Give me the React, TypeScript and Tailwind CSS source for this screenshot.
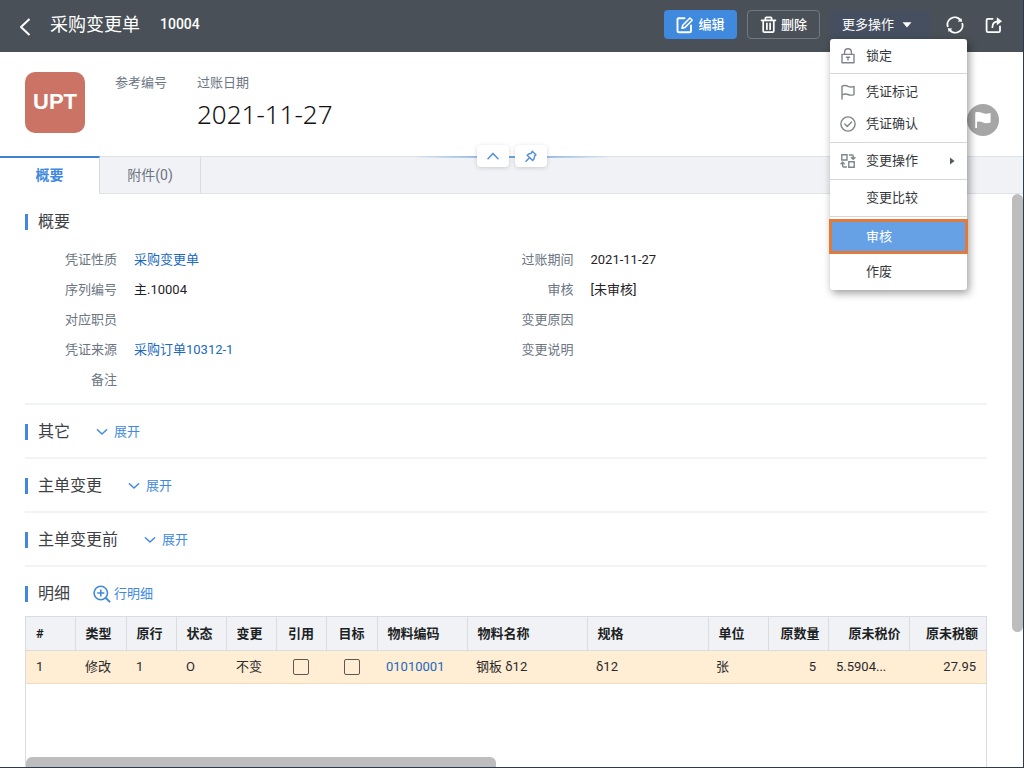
import React from "react";

const stroke = {
  fill: "none",
  stroke: "currentColor",
  strokeLinecap: "round" as const,
  strokeLinejoin: "round" as const,
};

function BackIcon() {
  return (
    <svg width="12" height="18" viewBox="0 0 12 18" {...stroke} strokeWidth="2" strokeLinecap="butt">
      <path d="M10.5 1 L2 9 L10.5 17" />
    </svg>
  );
}
function EditIcon() {
  return (
    <svg width="18" height="18" viewBox="0 0 18 18" {...stroke} strokeWidth="1.9">
      <path d="M8.5 2.2H2.8Q1.5 2.2 1.5 3.5V15Q1.5 16.3 2.8 16.3H13.7Q15 16.3 15 15V9.4" />
      <path d="M6 12.2 L6.8 9.2 L13.9 2 L16.2 4.3 L9 11.4Z" strokeWidth="1.6" />
    </svg>
  );
}
function TrashIcon() {
  return (
    <svg width="17" height="18" viewBox="0 0 17 18" {...stroke} strokeWidth="1.7">
      <path d="M1.5 4.3H15.5M5.4 4V2.2Q5.4 1.4 6.2 1.4H10.8Q11.6 1.4 11.6 2.2V4M3.2 4.5V15Q3.2 16.2 4.4 16.2H12.6Q13.8 16.2 13.8 15V4.5M6.9 7.4V13.2M10.1 7.4V13.2" />
    </svg>
  );
}
function RefreshIcon() {
  return (
    <svg width="18" height="18" viewBox="0 0 18 18" {...stroke} strokeWidth="1.9" strokeLinecap="butt">
      <path d="M1.9 11 A7.2 7.2 0 0 1 14.4 4.2M16.1 7 A7.2 7.2 0 0 1 3.6 13.8" />
      <path d="M16.2 5.7 L11.6 5.4 L15.3 2Z M1.8 12.3 L6.4 12.6 L2.7 16Z" fill="currentColor" stroke="none" />
    </svg>
  );
}
function ShareIcon() {
  return (
    <svg width="18" height="18" viewBox="0 0 18 18" {...stroke} strokeWidth="1.8">
      <path d="M7.6 2.8H3Q1.6 2.8 1.6 4.2V14.8Q1.6 16.2 3 16.2H13.6Q15 16.2 15 14.8V10.5" />
      <path d="M7.4 11.2C7.4 7.6 9.3 5.6 13.2 5.4" />
      <path d="M11.8 1.3 L17 5.3 L11.8 9.2Z" fill="currentColor" stroke="none" />
    </svg>
  );
}
function LockIcon() {
  return (
    <svg width="16" height="16" viewBox="0 0 16 16" {...stroke} strokeWidth="1.4">
      <path d="M2 6.4H14V14.8H2ZM4.6 6.2V4.2A3.4 3.4 0 0 1 11.4 4.2V6.2M6.4 9.2H9.6M8 9.4V12" />
    </svg>
  );
}
function FlagIcon() {
  return (
    <svg width="16" height="16" viewBox="0 0 16 16" {...stroke} strokeWidth="1.4">
      <path d="M2 15V2.2C4.4 1.2 6.2 1.4 8 2.3C9.8 3.2 11.6 3.2 14 2.4V10.6C11.6 11.4 9.8 11.4 8 10.5C6.2 9.8 4.4 9.9 2 10.8" />
    </svg>
  );
}
function CheckIcon() {
  return (
    <svg width="16" height="16" viewBox="0 0 16 16" {...stroke} strokeWidth="1.4">
      <circle cx="8" cy="8" r="7.1" />
      <path d="M4.8 8 L7.2 10.4 L11.6 6" />
    </svg>
  );
}
function SwapIcon() {
  return (
    <svg width="16" height="16" viewBox="0 0 16 16" {...stroke} strokeWidth="1.4" strokeLinejoin="miter">
      <path d="M1.8 1.8H7V7H1.8ZM8.8 8.8H14.2V14.2H8.8ZM9.4 2H12.2Q13.2 2 13.2 3V5.6M11.4 4.4L13.2 6.2L15 4.4M2.6 9.4V12.8Q2.6 14 3.8 14H6.4M1 10.8L2.6 9.2L4.2 10.8" />
    </svg>
  );
}
function Chevron({ up = false }: { up?: boolean }) {
  return (
    <svg width="12" height="8" viewBox="0 0 12 8" {...stroke} strokeWidth="1.5">
      <path d={up ? "M1 6.8 L6 1.4 L11 6.8" : "M1.4 1.8 L6 6 L10.6 1.8"} />
    </svg>
  );
}
function PinIcon() {
  return (
    <svg width="12" height="12" viewBox="0 0 12 12" {...stroke} strokeWidth="1.5">
      <path d="M7.2 1.2 L10.9 4.8 L9.6 5.8 L9 8.9 L7.6 10.4 L2.2 5.2 L3.7 4 L6.3 3.2ZM4.5 7.8 L1 11.2" />
    </svg>
  );
}
function ZoomIcon() {
  return (
    <svg width="18" height="18" viewBox="0 0 18 18" {...stroke} strokeWidth="1.6">
      <circle cx="7.8" cy="8" r="6.7" />
      <path d="M7.8 5V11M4.8 8H10.8" />
      <path d="M12.8 13 L16.5 16.6" strokeWidth="2" />
    </svg>
  );
}

function MenuItem({ icon, label, arrow = false }: { icon?: React.ReactNode; label: string; arrow?: boolean }) {
  return (
    <button type="button" role="menuitem" className="flex h-8 w-full items-center gap-2.5 pl-2.5 pr-3 text-left">
      <span className="flex w-4 shrink-0 text-[#7f858b]">{icon}</span>
      <span className="flex-1">{label}</span>
      {arrow && (
        <svg width="5" height="8" viewBox="0 0 5 8">
          <path d="M0 0.5 L4.6 4 L0 7.5Z" fill="#555b63" />
        </svg>
      )}
    </button>
  );
}

function MoreMenu() {
  return (
    <div
      role="menu"
      className="absolute left-0 top-full z-20 w-[137px] rounded-[3px] bg-white text-[13px] font-normal text-[#33373c] shadow-[2px_3px_8px_rgba(0,0,0,0.4)]"
    >
      <div className="border-b border-[#d5d7da] py-px">
        <MenuItem icon={<LockIcon />} label="锁定" />
      </div>
      <div className="border-b border-[#d5d7da] py-0.5">
        <MenuItem icon={<FlagIcon />} label="凭证标记" />
        <MenuItem icon={<CheckIcon />} label="凭证确认" />
      </div>
      <div className="border-b border-[#d5d7da] py-0.5">
        <MenuItem icon={<SwapIcon />} label="变更操作" arrow />
      </div>
      <div className="border-b border-[#d5d7da] py-0.5">
        <MenuItem label="变更比较" />
      </div>
      <div className="-mx-px mt-0.5 border-[3px] border-[#e17b3b] bg-[#66a1e6] text-white">
        <button type="button" role="menuitem" className="flex h-[29px] w-full items-center pl-[34px] text-left">
          审核
        </button>
      </div>
      <div className="py-0.5">
        <MenuItem label="作废" />
      </div>
    </div>
  );
}

function Header() {
  return (
    <header className="flex h-[52px] shrink-0 items-center bg-[#495057] pb-[3px] pl-[19px] pr-5 text-white">
      <button type="button" aria-label="返回" className="pt-1">
        <BackIcon />
      </button>
      <h1 className="ml-[19px] text-[18px] leading-6">采购变更单</h1>
      <span className="ml-5 text-[14px] font-medium">10004</span>
      <div className="ml-auto flex h-[29px] items-center gap-2.5 text-[13px] font-medium">
        <button type="button" className="flex h-full w-[73px] items-center justify-center gap-1 rounded bg-[#3f89de]">
          <EditIcon />
          编辑
        </button>
        <button
          type="button"
          className="flex h-full w-[73px] items-center justify-center gap-1 rounded border border-[#727980]"
        >
          <TrashIcon />
          删除
        </button>
        <div className="relative h-full">
          <button
            type="button"
            aria-haspopup="menu"
            aria-expanded="true"
            className="flex h-full w-[100px] items-center gap-2 rounded bg-[#454f60] pl-3 font-normal"
          >
            更多操作
            <svg width="10" height="6" viewBox="0 0 10 6">
              <path d="M0.5 0.3H9.5L5 5.5Z" fill="currentColor" />
            </svg>
          </button>
          <MoreMenu />
        </div>
        <button type="button" aria-label="刷新" className="ml-1.5">
          <RefreshIcon />
        </button>
        <button type="button" aria-label="分享" className="ml-[11px]">
          <ShareIcon />
        </button>
      </div>
    </header>
  );
}

function Summary() {
  return (
    <section className="relative flex h-[104px] shrink-0 bg-white pl-[25px] pr-6 pt-5">
      <div className="flex h-[61px] w-[60px] items-center justify-center rounded-[10px] bg-[#cb7466] pb-0.5 font-['Liberation_Sans',sans-serif] text-[22px] font-bold text-white">
        UPT
      </div>
      <div className="ml-[30px] text-[13px] leading-[22px] text-[#6c7683]">参考编号</div>
      <div className="ml-[30px]">
        <div className="text-[13px] leading-[22px] text-[#6c7683]">过账日期</div>
        <div className="font-['Noto_Sans',sans-serif] text-[26px] font-light leading-10 text-[#111]">2021-11-27</div>
      </div>
      <button
        type="button"
        aria-label="标记"
        className="ml-auto mt-8 flex h-8 w-8 items-center justify-center rounded-full bg-[#a6a6a6] text-white"
      >
        <svg width="18" height="18" viewBox="0 0 18 18" fill="currentColor">
          <path d="M1.2 1.4C3.8 0.6 5.8 0.8 8 1.8C10.8 3 13 3 16.6 1.9V11.5C13 12.6 11 12.3 8.4 11.2C6.4 10.4 4.6 10.4 3 10.9V17H1.2Z" />
        </svg>
      </button>
      <div className="absolute -bottom-[11px] left-1/2 z-10 flex h-[22px] w-[200px] -translate-x-1/2 items-center justify-center gap-1.5">
        <span className="absolute inset-x-0 top-[11px] h-0.5 bg-gradient-to-r from-transparent via-[#6fa6e4] to-transparent" />
        <button
          type="button"
          aria-label="收起"
          className="relative flex h-[22px] w-8 items-center justify-center rounded-sm bg-white text-[#5590da] shadow-[0_1px_4px_rgba(0,0,0,0.16)]"
        >
          <Chevron up />
        </button>
        <button
          type="button"
          aria-label="固定"
          className="relative flex h-[22px] w-8 items-center justify-center rounded-sm bg-white text-[#5590da] shadow-[0_1px_4px_rgba(0,0,0,0.16)]"
        >
          <PinIcon />
        </button>
      </div>
    </section>
  );
}

function Tabs() {
  return (
    <div role="tablist" className="flex h-[38px] shrink-0 border-y border-[#dfe2e7] bg-[#f1f2f6] text-[14px]">
      <button
        type="button"
        role="tab"
        aria-selected="true"
        className="-my-px w-[100px] border-r border-t-2 border-r-[#d9dce2] border-t-[#3f83d4] bg-white pb-0.5 font-bold text-[#4189de]"
      >
        概要
      </button>
      <button type="button" role="tab" aria-selected="false" className="w-[101px] border-r border-[#d9dce2] text-[#6c7580]">
        附件(0)
      </button>
    </div>
  );
}

function SectionTitle({ children }: { children: React.ReactNode }) {
  return (
    <h2 className="flex items-center gap-2.5 text-[16px] leading-6 text-[#3d4146]">
      <span className="h-4 w-[3px] bg-[#4189d8]" />
      {children}
    </h2>
  );
}

type FieldData = { label: string; value?: string; link?: boolean };

const leftFields: FieldData[] = [
  { label: "凭证性质", value: "采购变更单", link: true },
  { label: "序列编号", value: "主.10004" },
  { label: "对应职员" },
  { label: "凭证来源", value: "采购订单10312-1", link: true },
  { label: "备注" },
];
const rightFields: FieldData[] = [
  { label: "过账期间", value: "2021-11-27" },
  { label: "审核", value: "[未审核]" },
  { label: "变更原因" },
  { label: "变更说明" },
];

function FieldList({ fields }: { fields: FieldData[] }) {
  return (
    <dl>
      {fields.map((f) => (
        <div key={f.label} className="flex h-[30px] items-center">
          <dt className="w-[92px] text-right text-[#6c7683]">{f.label}</dt>
          <dd className="ml-[17px] text-[#1f2226]">
            {f.link ? (
              <a href="#" className="text-[#2069bd]">
                {f.value}
              </a>
            ) : (
              f.value
            )}
          </dd>
        </div>
      ))}
    </dl>
  );
}

function Collapsed({ title }: { title: string }) {
  return (
    <section className="flex h-[54px] items-center border-b-2 border-[#f2f3f5] pt-px">
      <SectionTitle>{title}</SectionTitle>
      <button type="button" aria-expanded="false" className="ml-[26px] flex items-center gap-1.5 text-[#4189de]">
        <Chevron />
        展开
      </button>
    </section>
  );
}

const columns: { name: string; width: string; align?: "center" | "right" }[] = [
  { name: "#", width: "w-[49px]" },
  { name: "类型", width: "w-[51px]" },
  { name: "原行", width: "w-[50px]" },
  { name: "状态", width: "w-[50px]" },
  { name: "变更", width: "w-[50px]" },
  { name: "引用", width: "w-[50px]", align: "center" },
  { name: "目标", width: "w-[51px]", align: "center" },
  { name: "物料编码", width: "w-[90px]" },
  { name: "物料名称", width: "w-[120px]" },
  { name: "规格", width: "w-[121px]" },
  { name: "单位", width: "w-[60px]" },
  { name: "原数量", width: "w-[60px]", align: "right" },
  { name: "原未税价", width: "w-[81px]", align: "right" },
  { name: "原未税额", width: "w-auto", align: "right" },
];

function Details() {
  return (
    <section className="flex min-h-0 flex-1 flex-col">
      <div className="flex h-[49px] shrink-0 items-center pt-[5px]">
        <SectionTitle>明细</SectionTitle>
        <button type="button" className="ml-[23px] flex items-center gap-[3px] text-[#4189de]">
          <ZoomIcon />
          行明细
        </button>
      </div>
      <div className="flex min-h-0 flex-1 flex-col border-x border-t border-[#d9dce1]">
        <table className="w-full table-fixed border-collapse">
          <colgroup>
            {columns.map((c) => (
              <col key={c.name} className={c.width} />
            ))}
          </colgroup>
          <thead>
            <tr className="h-[33px] bg-[#f1f2f6] text-[#1c1f23]">
              {columns.map((c) => (
                <th
                  key={c.name}
                  scope="col"
                  className={
                    "whitespace-nowrap border-b border-r border-[#d9dce1] p-0 font-bold last:border-r-0 " +
                    (c.align === "right" ? "pr-2 text-right" : c.align === "center" ? "text-center" : "pl-2.5 text-left")
                  }
                >
                  {c.name}
                </th>
              ))}
            </tr>
          </thead>
          <tbody>
            <tr className="h-[33px] border-b border-[#ecdcc0] bg-[#ffedd4] text-[#2a2a2a]">
              <td className="pl-2.5">1</td>
              <td className="pl-2.5">修改</td>
              <td className="pl-2.5">1</td>
              <td className="pl-2.5">O</td>
              <td className="pl-2.5">不变</td>
              {["引用", "目标"].map((name) => (
                <td key={name}>
                  <input
                    type="checkbox"
                    aria-label={name}
                    className="mx-auto block h-4 w-4 appearance-none rounded-xs border border-[#5c5752] bg-transparent"
                  />
                </td>
              ))}
              <td className="pl-[9px]">
                <a href="#" className="text-[#2069bd]">
                  01010001
                </a>
              </td>
              <td className="pl-[9px]">钢板 δ12</td>
              <td className="pl-[9px]">δ12</td>
              <td className="pl-2">张</td>
              <td className="pr-3 text-right">5</td>
              <td className="pl-2">5.5904...</td>
              <td className="pr-2.5 text-right">27.95</td>
            </tr>
          </tbody>
        </table>
        <div className="mt-auto h-2.5 w-[49%] shrink-0 rounded-t-md bg-[#bdbdbd]" />
      </div>
    </section>
  );
}

export default function App() {
  return (
    <div className="flex h-screen flex-col overflow-hidden border-b border-r border-[#2a3c4e] bg-white font-['Roboto','Noto_Sans_CJK_SC',sans-serif] text-[13px]">
      <Header />
      <Summary />
      <Tabs />
      <div className="flex min-h-0 flex-1">
        <main className="flex min-w-0 flex-1 flex-col px-[25px]">
          <section className="border-b-2 border-[#f2f3f5] pb-2 pt-4">
            <SectionTitle>概要</SectionTitle>
            <div className="mt-[11px] grid grid-cols-2 pr-[49px]">
              <FieldList fields={leftFields} />
              <FieldList fields={rightFields} />
            </div>
          </section>
          <Collapsed title="其它" />
          <Collapsed title="主单变更" />
          <Collapsed title="主单变更前" />
          <Details />
        </main>
        <div className="w-[11px] shrink-0">
          <div className="h-[438px] rounded-md bg-[#bdbdbd]" />
        </div>
      </div>
    </div>
  );
}
